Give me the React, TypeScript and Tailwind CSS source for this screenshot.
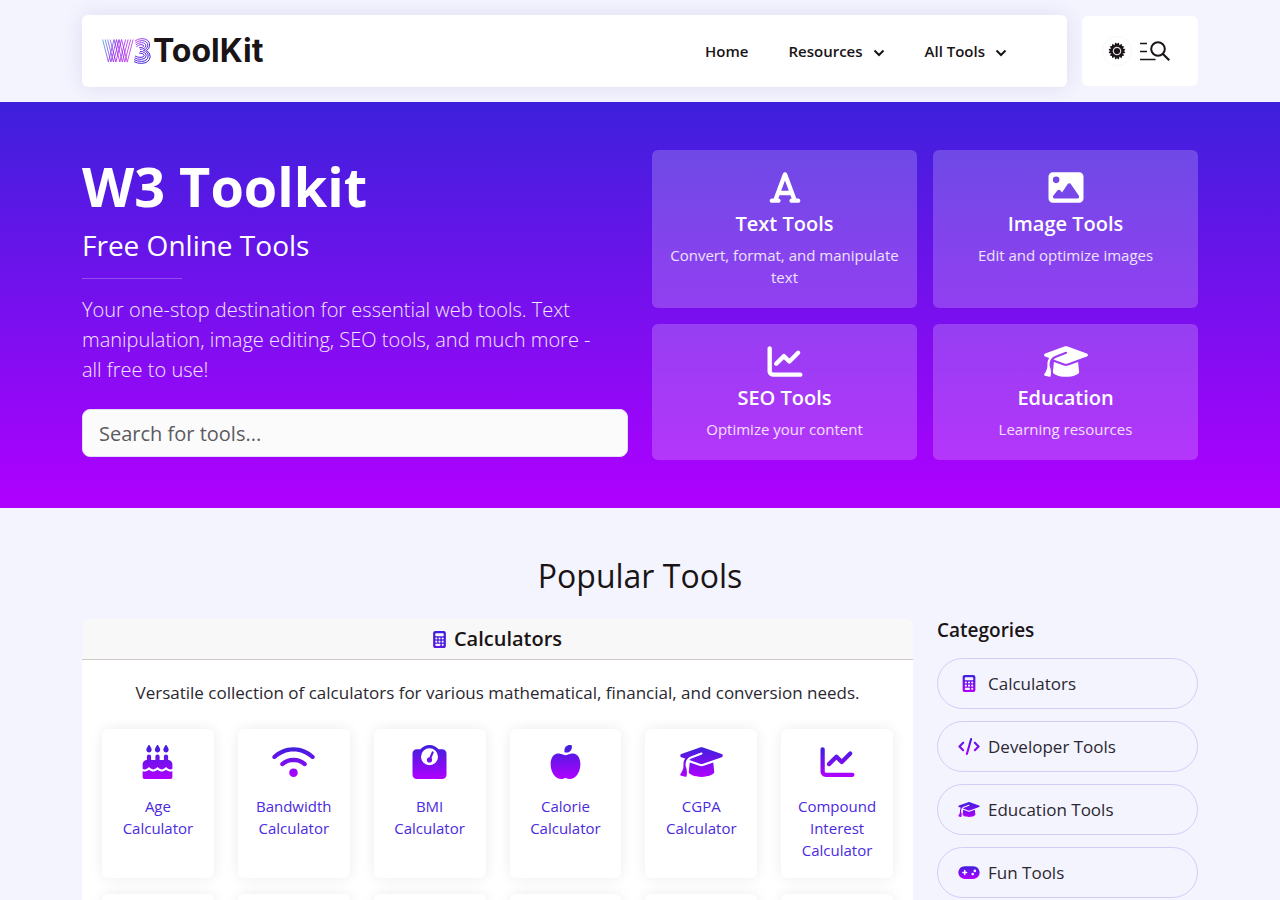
import type { IconType } from "react-icons";
import {
  FaAppleWhole,
  FaCakeCandles,
  FaCalculator,
  FaChartLine,
  FaCode,
  FaFont,
  FaGamepad,
  FaGraduationCap,
  FaImage,
  FaWeightScale,
  FaWifi,
} from "react-icons/fa6";

const features: { icon: IconType; title: string; text: string }[] = [
  { icon: FaFont, title: "Text Tools", text: "Convert, format, and manipulate text" },
  { icon: FaImage, title: "Image Tools", text: "Edit and optimize images" },
  { icon: FaChartLine, title: "SEO Tools", text: "Optimize your content" },
  { icon: FaGraduationCap, title: "Education", text: "Learning resources" },
];

const calculators: { icon: IconType; name: string }[] = [
  { icon: FaCakeCandles, name: "Age Calculator" },
  { icon: FaWifi, name: "Bandwidth Calculator" },
  { icon: FaWeightScale, name: "BMI Calculator" },
  { icon: FaAppleWhole, name: "Calorie Calculator" },
  { icon: FaGraduationCap, name: "CGPA Calculator" },
  { icon: FaChartLine, name: "Compound Interest Calculator" },
];

const categories: { icon: IconType; name: string }[] = [
  { icon: FaCalculator, name: "Calculators" },
  { icon: FaCode, name: "Developer Tools" },
  { icon: FaGraduationCap, name: "Education Tools" },
  { icon: FaGamepad, name: "Fun Tools" },
];

// Shared gradients, referenced by the icons through fill-[url(#...)]
function GradientDefs() {
  return (
    <svg width="0" height="0" className="absolute" aria-hidden>
      <defs>
        <linearGradient id="brand" x1="0" y1="0" x2="0" y2="1">
          <stop offset="0" stopColor="#3d20dc" />
          <stop offset="1" stopColor="#b000ff" />
        </linearGradient>
        <linearGradient id="brand-soft" x1="0" y1="0" x2="0" y2="1">
          <stop offset="0" stopColor="#3d20dc" />
          <stop offset="1" stopColor="#5a1ae6" />
        </linearGradient>
      </defs>
    </svg>
  );
}

function Logo() {
  return (
    <a href="#" className="flex items-center gap-0.5 text-[#1a1416]" aria-label="W3 ToolKit">
      <svg width="49" height="28" viewBox="0 0 49 28" fill="none" aria-hidden>
        <defs>
          <linearGradient id="logo-w" gradientUnits="userSpaceOnUse" x1="0" y1="2" x2="32" y2="12">
            <stop offset="0" stopColor="#3aa0e0" />
            <stop offset="0.5" stopColor="#9a20f0" />
            <stop offset="1" stopColor="#c030e8" />
          </linearGradient>
          <linearGradient id="logo-3" gradientUnits="userSpaceOnUse" x1="32" y1="3" x2="48" y2="20">
            <stop offset="0" stopColor="#c050f0" />
            <stop offset="0.5" stopColor="#6a30e8" />
            <stop offset="1" stopColor="#3a20dc" />
          </linearGradient>
        </defs>
        <g stroke="url(#logo-w)" strokeWidth="0.8">
          <path d="M0.6 2.5 L6.4 25 L12 2.5 L17.8 25 L23.6 2.5" />
          <path d="M3.1 2.5 L8.9 25 L14.5 2.5 L20.3 25 L26.1 2.5" />
          <path d="M5.6 2.5 L11.4 25 L17 2.5 L22.8 25 L28.6 2.5" />
          <path d="M8.1 2.5 L13.9 25 L19.5 2.5 L25.3 25 L31.1 2.5" />
        </g>
        <g stroke="url(#logo-3)" strokeWidth="1">
          <path d="M33 4 Q36 1.6 40 1.6 Q47.6 2 47.6 8 Q47.6 12 44.5 13.5 Q48.2 15.5 48.2 19.5 Q47.6 26 39.5 26.4 Q35 26.4 32 24.6" />
          <path d="M33.4 6 Q36 3.6 40 3.6 Q45.8 4 45.8 8.4 Q45.6 12.4 41.4 13.4 Q46.2 14.6 46.2 19 Q45.6 24.2 39.5 24.4 Q35 24.4 32 22.6" />
          <path d="M33.8 8 Q36.4 5.6 39.6 5.6 Q43.8 6 43.8 8.8 Q43.4 12 38 12.4 M38 14.4 Q44.2 14.8 44.2 18.8 Q43.6 22.2 39.2 22.4 Q35 22.4 32.6 20.8" />
          <path d="M34.4 9.8 Q36.6 7.6 39 7.6 Q41.8 7.8 41.8 9 Q41.4 10.6 37 10.8 M37 16 Q42 16.2 42.2 18.4 Q41.8 20.2 39 20.4 Q35.4 20.4 33 19" />
        </g>
      </svg>
      <span className="font-[Inter,sans-serif] text-[32px] font-bold leading-10">ToolKit</span>
    </a>
  );
}

function Chevron() {
  return (
    <svg width="12" height="8" viewBox="0 0 12 8" fill="none" aria-hidden className="mt-1">
      <path d="M1.5 1.5 L6 6 L10.5 1.5" stroke="currentColor" strokeWidth="2" />
    </svg>
  );
}

function Header() {
  return (
    <header className="mx-auto flex max-w-[1140px] items-center gap-[15px] px-3 py-[15px]">
      <div className="flex h-[72px] flex-1 items-center justify-between rounded-md bg-white pl-5 pr-[60px] shadow-[0_0_20px_rgba(60,50,120,0.12)]">
        <Logo />
        <nav className="flex items-center gap-10 text-[15px] font-semibold">
          <a href="#">Home</a>
          <button type="button" className="flex items-center gap-2.5">
            Resources
            <Chevron />
          </button>
          <button type="button" className="flex items-center gap-2.5">
            All Tools
            <Chevron />
          </button>
        </nav>
      </div>
      <div className="flex h-[70px] w-[116px] items-center justify-center gap-2 rounded-md bg-white pr-2">
        <button
          type="button"
          aria-label="Toggle theme"
          className="flex size-[30px] items-center justify-center rounded-full border border-[#f7f7fa]"
        >
          <svg width="18" height="18" viewBox="-9 -9 18 18" aria-hidden>
            <g fill="#1a1416">
              <circle r="6.2" />
              <path id="tooth" d="M-2.4 -5.4 L-1.9 -8.4 L0 -7.2 L1.9 -8.4 L2.4 -5.4Z" />
              <use href="#tooth" transform="rotate(45)" />
              <use href="#tooth" transform="rotate(90)" />
              <use href="#tooth" transform="rotate(135)" />
              <use href="#tooth" transform="rotate(180)" />
              <use href="#tooth" transform="rotate(225)" />
              <use href="#tooth" transform="rotate(270)" />
              <use href="#tooth" transform="rotate(315)" />
            </g>
            <circle r="3.7" fill="none" stroke="#dedce6" strokeWidth="1.2" />
          </svg>
        </button>
        <button type="button" aria-label="Search">
          <svg width="30" height="20" viewBox="0 0 30 20" fill="none" stroke="#1a1416" aria-hidden>
            <path d="M0 2.5 H7 M0 10.5 H7 M0 18.5 H15.5" strokeWidth="1.6" />
            <circle cx="18" cy="8" r="6.8" strokeWidth="2" />
            <path d="M23 13 L29.2 19.2" strokeWidth="2.2" />
          </svg>
        </button>
      </div>
    </header>
  );
}

function Hero() {
  return (
    <section className="bg-linear-to-b/srgb from-[#3d20dc] to-[#b000ff] py-12 text-white">
      <div className="mx-auto grid max-w-[1140px] grid-cols-2 items-center gap-6 px-3">
        <div>
          <h1 className="mb-2 text-[54px] font-bold leading-[67px]">W3 Toolkit</h1>
          <p className="mb-4 text-[28px] font-medium leading-[34px]">Free Online Tools</p>
          <hr className="mb-4 w-[100px] border-white/25" />
          <p className="mb-6 pr-4 text-xl font-light leading-[30px] text-white/90">
            Your one-stop destination for essential web tools. Text manipulation, image editing, SEO
            tools, and much more - all free to use!
          </p>
          <input
            type="search"
            aria-label="Search for tools"
            placeholder="Search for tools..."
            className="block h-12 w-full rounded-lg border border-[#e4dcf4] bg-[#fbfbfb] px-4 text-xl text-[#1a1416] placeholder:text-[#5c5a60]"
          />
        </div>
        <div className="grid grid-cols-2 gap-4">
          {features.map(({ icon: Icon, title, text }) => (
            <a key={title} href="#" className="rounded-md bg-white/20 px-4 py-5 text-center">
              <Icon className="mx-auto mb-[7px] h-[35px] w-11" aria-hidden />
              <h2 className="mb-2 text-xl font-semibold leading-6">{title}</h2>
              <p className="text-[15px] leading-[22px] text-white/85">{text}</p>
            </a>
          ))}
        </div>
      </div>
    </section>
  );
}

function Calculators() {
  return (
    <section className="col-span-9 rounded-t-lg bg-white text-center">
      <h3 className="flex items-center justify-center gap-2 rounded-t-lg border-b border-[#cfc8c4] bg-[#f8f8f8] py-2 text-xl font-semibold leading-6">
        <FaCalculator className="h-[17px] w-[13px] fill-[url(#brand-soft)]" aria-hidden />
        Calculators
      </h3>
      <div className="p-5">
        <p className="mb-6 text-[17px] leading-[25px] text-[#2a2730]">
          Versatile collection of calculators for various mathematical, financial, and conversion
          needs.
        </p>
        <div className="grid grid-cols-6 gap-x-6 gap-y-4">
          {calculators.map(({ icon: Icon, name }) => (
            <a
              key={name}
              href="#"
              className="min-h-[149px] rounded-md bg-white p-4 text-[15px] leading-[22px] text-[#4a2ae0] shadow-[0_0_14px_rgba(0,0,0,0.08)]"
            >
              <Icon className="mx-auto mb-4 h-[34px] w-[43px] fill-[url(#brand)]" aria-hidden />
              {name}
            </a>
          ))}
          {/* next row, still loading */}
          {calculators.map(({ name }) => (
            <div key={name} className="min-h-[149px] rounded-md bg-white shadow-[0_0_14px_rgba(0,0,0,0.08)]" />
          ))}
        </div>
      </div>
    </section>
  );
}

function Categories() {
  return (
    <aside className="col-span-3">
      <h3 className="mb-4 text-[19px] font-semibold leading-[23px]">Categories</h3>
      <ul className="flex flex-col gap-3">
        {categories.map(({ icon: Icon, name }) => (
          <li key={name}>
            <a
              href="#"
              className="flex items-center gap-2 rounded-full border border-[#d3ccf8] px-5 py-3 text-[17px] leading-[25px] text-[#2a2730]"
            >
              <Icon className="h-[17px] w-[22px] fill-[url(#brand)]" aria-hidden />
              {name}
            </a>
          </li>
        ))}
      </ul>
    </aside>
  );
}

export default function App() {
  return (
    <div className="min-h-screen bg-[#f4f4ff] font-['Open_Sans',sans-serif] text-[#1a1416]">
      <GradientDefs />
      <Header />
      <Hero />
      <main className="mx-auto max-w-[1140px] px-3 py-12">
        <h2 className="mb-6 text-center text-[32px] font-medium leading-[39px]">Popular Tools</h2>
        <div className="grid grid-cols-12 items-start gap-6">
          <Calculators />
          <Categories />
        </div>
      </main>
    </div>
  );
}
